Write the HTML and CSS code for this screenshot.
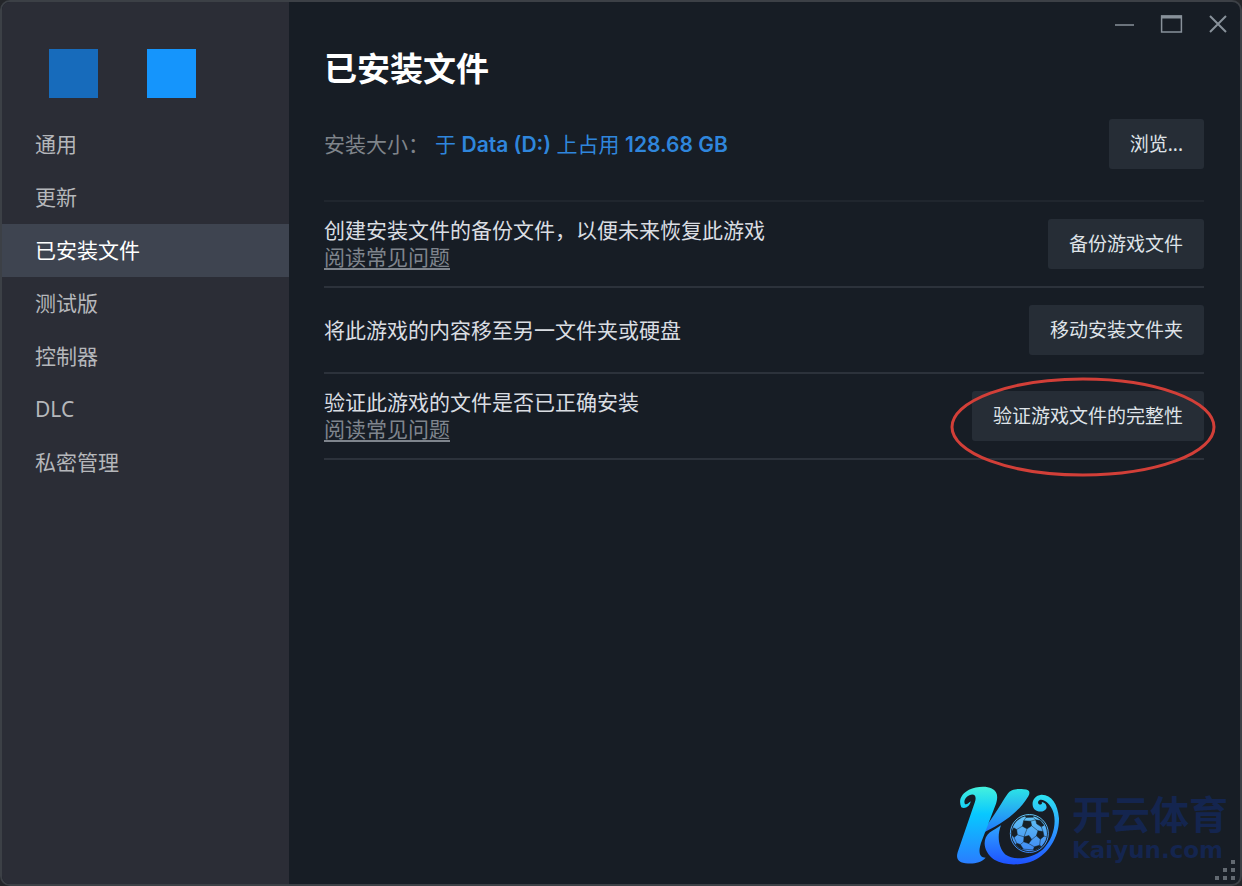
FILE: index.html
```html
<!DOCTYPE html>
<html lang="zh-CN">
<head>
<meta charset="utf-8">
<meta name="viewport" content="width=device-width, initial-scale=1">
<title>已安装文件</title>
<link rel="stylesheet" href="styles.css">
</head>
<body>
<div class="window">
  <aside class="sidebar">
    <div class="swatches">
      <span class="swatch swatch-dark"></span>
      <span class="swatch swatch-light"></span>
    </div>
    <nav class="nav">
      <a class="nav-item" href="#general">通用</a>
      <a class="nav-item" href="#updates">更新</a>
      <a class="nav-item active" href="#files" aria-current="page">已安装文件</a>
      <a class="nav-item" href="#betas">测试版</a>
      <a class="nav-item" href="#controller">控制器</a>
      <a class="nav-item" href="#dlc">DLC</a>
      <a class="nav-item" href="#privacy">私密管理</a>
    </nav>
  </aside>

  <main class="content">
    <div class="window-controls">
      <button class="control" type="button" aria-label="最小化">
        <svg width="24" height="24" viewBox="0 0 24 24"><path d="M3 14H22" stroke-width="1.6"/></svg>
      </button>
      <button class="control" type="button" aria-label="最大化">
        <svg width="24" height="24" viewBox="0 0 24 24"><path d="M2.6 5H22.4V21H2.6Z" stroke-width="1.5"/><path d="M2 6H23" stroke-width="3"/></svg>
      </button>
      <button class="control" type="button" aria-label="关闭">
        <svg width="24" height="24" viewBox="0 0 24 24"><path d="M4 5L20 21M20 5L4 21" stroke-width="2"/></svg>
      </button>
    </div>

    <h1 class="title">已安装文件</h1>

    <section class="row row-size">
      <p class="size"><span class="size-label">安装大小：</span><span class="size-value">于 <b>Data (D:)</b> 上占用 <b>128.68 GB</b></span></p>
      <button class="button" type="button">浏览...</button>
    </section>

    <section class="row">
      <div class="text">
        <p>创建安装文件的备份文件，以便未来恢复此游戏</p>
        <a class="faq" href="#backup-faq">阅读常见问题</a>
      </div>
      <button class="button" type="button">备份游戏文件</button>
    </section>

    <section class="row">
      <div class="text"><p>将此游戏的内容移至另一文件夹或硬盘</p></div>
      <button class="button" type="button">移动安装文件夹</button>
    </section>

    <section class="row">
      <div class="text">
        <p>验证此游戏的文件是否已正确安装</p>
        <a class="faq" href="#verify-faq">阅读常见问题</a>
      </div>
      <div class="marked">
        <button class="button" type="button">验证游戏文件的完整性</button>
        <svg class="ring" viewBox="0 0 266 100" aria-hidden="true"><ellipse cx="133" cy="50" rx="131" ry="48"/></svg>
      </div>
    </section>
  </main>

  <div class="brand">
    <svg class="brand-logo" viewBox="48 46 312 242" aria-hidden="true">
      <defs>
        <linearGradient id="stem" x1="0" y1="50" x2="0" y2="285" gradientUnits="userSpaceOnUse">
          <stop offset="0" stop-color="#45f2dd"/><stop offset=".35" stop-color="#08c8ff"/><stop offset="1" stop-color="#2a7bff"/>
        </linearGradient>
        <linearGradient id="arm" x1="0" y1="55" x2="0" y2="200" gradientUnits="userSpaceOnUse">
          <stop offset="0" stop-color="#2ce4e6"/><stop offset="1" stop-color="#1f6bff"/>
        </linearGradient>
        <linearGradient id="sweep" x1="0" y1="72" x2="0" y2="285" gradientUnits="userSpaceOnUse">
          <stop offset="0" stop-color="#2de5f0"/><stop offset=".5" stop-color="#2d9cff"/><stop offset="1" stop-color="#1e50ff"/>
        </linearGradient>
        <linearGradient id="ball" x1="0" y1="135" x2="0" y2="250" gradientUnits="userSpaceOnUse">
          <stop offset="0" stop-color="#62c4f5"/><stop offset="1" stop-color="#3d86f5"/>
        </linearGradient>
        <clipPath id="ball-clip"><circle cx="268" cy="191" r="53"/></clipPath>
      </defs>
      <path fill="url(#arm)" d="M118 193C150 160 178 108 202 73C213 57 232 56 251 58C268 58 272 66 265 79C235 130 178 168 118 193Z"/>
      <path fill="url(#stem)" d="M64 112C54 91 65 72 87 60C108 50 139 48 155 56C172 64 175 78 168 102L126 211C113 244 117 264 137 264C124 278 106 282 84 281C55 280 47 268 53 247L105 96C110 80 105 70 88 76C75 82 70 94 75 103C82 105 86 98 92 94C91 108 75 119 64 112Z"/>
      <path fill="url(#sweep)" d="M183 166C170 199 176 235 196 254C223 274 276 267 309 238C337 211 350 166 341 130C332 101 311 86 298 91C291 96 294 106 303 104C308 101 306 97 304 97C316 96 322 108 319 116C314 127 294 129 283 118C271 102 280 78 304 75C334 74 353 102 357 145C358 205 323 253 280 273C247 287 194 289 163 270C128 245 126 207 149 188C162 178 173 174 183 166Z"/>
      <circle cx="268" cy="191" r="57" fill="#172027" stroke="url(#ball)" stroke-width="3"/>
      <circle cx="268" cy="191" r="53" fill="url(#ball)"/>
      <g clip-path="url(#ball-clip)" fill="#172027" stroke="#172027" stroke-width="1.5">
        <path d="M251 153L272 154L275 168L261 177L247 169Z"/>
        <path d="M287 150L301 152L312 166L304 171L290 162Z"/>
        <path d="M294 183L309 185L312 199L301 208L289 198Z"/>
        <path d="M252 201L267 197L275 209L266 221L251 216Z"/>
        <path d="M221 174L230 179L232 195L222 203L212 192Z"/>
        <path d="M230 220L241 224L250 238L238 240L226 228Z"/>
        <path d="M283 231L299 226L306 232L290 244L280 240Z"/>
        <path d="M253 136L282 136L279 142L258 143Z"/>
        <path fill="none" d="M251 153L258 143M272 154L287 150M275 168L294 183M261 177L252 201M247 169L230 179M279 142L287 150M304 171L309 185M289 198L275 209M301 208L299 226M312 199L324 202M266 221L283 231M251 216L241 224M252 201L232 195M222 203L230 220M250 238L280 240"/>
      </g>
    </svg>
    <div class="brand-text">
      <span class="brand-name">开云体育</span>
      <span class="brand-url">Kaiyun.com</span>
    </div>
  </div>

  <svg class="grip" width="22" height="22" viewBox="0 0 22 22" aria-hidden="true">
    <path d="M17 1h4v4h-4zM9 9h4v4H9zM17 9h4v4h-4zM1 17h4v4H1zM9 17h4v4H9zM17 17h4v4h-4z"/>
  </svg>
</div>
</body>
</html>
```
FILE: styles.css
```css
* {
  box-sizing: border-box;
}

body {
  margin: 0;
  background: #24262a;
  font-family: "Noto Sans", "Noto Sans CJK SC", sans-serif;
  font-size: 21px;
  line-height: 27px;
}

p,
h1 {
  margin: 0;
}

.window {
  position: relative;
  display: flex;
  min-height: 100vh;
  border: 2px solid #3c4046;
  border-radius: 10px;
  background: #171d25;
  overflow: hidden;
}

.sidebar {
  flex: 0 0 287px;
  background: #2b2d36;
}

.swatches {
  display: flex;
  gap: 49px;
  padding: 47px 47px 20px;
}

.swatch {
  width: 49px;
  height: 49px;
}

.swatch-dark {
  background: #176bbb;
}

.swatch-light {
  background: #1595fc;
}

.nav {
  display: flex;
  flex-direction: column;
}

.nav-item {
  padding: 13px 33px;
  color: #b5b7bb;
  text-decoration: none;
}

.nav-item.active {
  background: #3e4450;
  color: #fff;
}

.content {
  flex: 1;
  min-width: 0;
  padding: 0 36px 36px 35px;
  color: #dadde2;
}

.window-controls {
  display: flex;
  justify-content: flex-end;
  gap: 23px;
  height: 44px;
  padding-top: 9px;
  margin-right: -26px;
}

.control {
  width: 24px;
  height: 24px;
  padding: 0;
  border: 0;
  background: none;
}

.control svg {
  display: block;
  fill: none;
  stroke: #88919a;
}

.title {
  color: #fff;
  font-size: 33px;
  font-weight: 700;
  line-height: 46px;
}

.row {
  display: flex;
  align-items: center;
  justify-content: space-between;
  gap: 24px;
  min-height: 86px;
  border-bottom: 2px solid #2c323b;
}

.row-size {
  min-height: 110px;
  padding-bottom: 4px;
  border-bottom-color: #20262e;
}

.size {
  display: flex;
  gap: 6px;
}

.size-label {
  color: #7f848a;
}

.size-value {
  color: #2f86dc;
}

.size-value b {
  font-family: Inter, "Noto Sans", sans-serif;
  font-weight: 600;
}

.faq {
  display: block;
  width: max-content;
  color: #7f858d;
  text-underline-offset: 3px;
}

.button {
  flex: none;
  height: 50px;
  padding: 0 21px;
  border: 0;
  border-radius: 3px;
  background: #262d36;
  color: #dfe3e8;
  font: inherit;
  font-size: 19px;
}

.marked {
  position: relative;
  flex: none;
}

.ring {
  position: absolute;
  top: -14px;
  left: -22px;
  width: 266px;
  height: 100px;
  pointer-events: none;
}

.ring ellipse {
  fill: none;
  stroke: #d23f38;
  stroke-width: 3;
}

.brand {
  position: absolute;
  right: 12px;
  bottom: 18px;
  display: flex;
  align-items: center;
  gap: 12px;
  color: #14254f;
}

.brand-logo {
  width: 104px;
  height: 81px;
}

.brand-text {
  display: flex;
  flex-direction: column;
  font-weight: 700;
}

.brand-name {
  font-family: "Noto Sans CJK SC", sans-serif;
  font-size: 39px;
  line-height: 48px;
}

.brand-url {
  font-family: "DejaVu Sans", sans-serif;
  font-size: 23px;
  line-height: 28px;
}

.grip {
  position: absolute;
  right: 4px;
  bottom: 3px;
  fill: #626971;
}
```
